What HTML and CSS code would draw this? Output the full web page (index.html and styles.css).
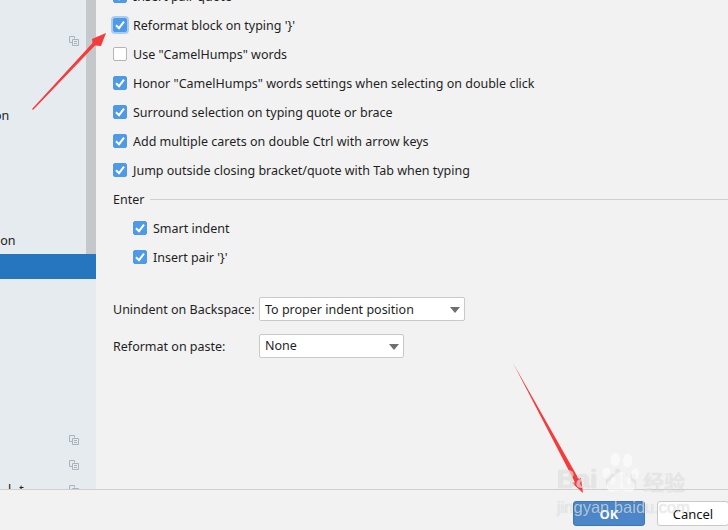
FILE: index.html
```html
<!DOCTYPE html>
<html lang="en">
<head>
  <meta charset="UTF-8" />
  <title>Smart Keys</title>
  <link rel="stylesheet" href="styles.css">
</head>
<body>
  <div class="main">
    <!-- settings tree, cut off on the left -->
    <div class="sidebar">
      <div class="tree">
        <div class="tree-row row-a">
          <svg class="copy-icon" viewBox="0 0 10 10"><use href="#copy"/></svg>
        </div>
        <div class="tree-row row-b"><span class="tree-label">on</span></div>
        <div class="tree-row row-c"><span class="tree-label">ion</span></div>
        <div class="tree-row selected"></div>
        <div class="tree-row row-d"><svg class="copy-icon" viewBox="0 0 10 10"><use href="#copy"/></svg></div>
        <div class="tree-row row-e"><svg class="copy-icon" viewBox="0 0 10 10"><use href="#copy"/></svg></div>
        <div class="tree-row row-f"><span class="tree-label">l</span><span class="tree-label">t</span><svg class="copy-icon" viewBox="0 0 10 10"><use href="#copy"/></svg></div>
      </div>
      <div class="scrollbar"></div>
    </div>

    <div class="content">
      <div class="options">
        <label class="option"><span class="box on"><svg viewBox="0 0 14 14"><use href="#tick"/></svg></span>Insert pair quote</label>
        <label class="option"><span class="box on focus"><svg viewBox="0 0 14 14"><use href="#tick"/></svg></span>Reformat block on typing '}'</label>
        <label class="option"><span class="box"></span>Use "CamelHumps" words</label>
        <label class="option"><span class="box on"><svg viewBox="0 0 14 14"><use href="#tick"/></svg></span>Honor "CamelHumps" words settings when selecting on double click</label>
        <label class="option"><span class="box on"><svg viewBox="0 0 14 14"><use href="#tick"/></svg></span>Surround selection on typing quote or brace</label>
        <label class="option"><span class="box on"><svg viewBox="0 0 14 14"><use href="#tick"/></svg></span>Add multiple carets on double Ctrl with arrow keys</label>
        <label class="option"><span class="box on"><svg viewBox="0 0 14 14"><use href="#tick"/></svg></span>Jump outside closing bracket/quote with Tab when typing</label>
      </div>

      <div class="group-title"><span>Enter</span><i></i></div>
      <div class="options nested">
        <label class="option"><span class="box on"><svg viewBox="0 0 14 14"><use href="#tick"/></svg></span>Smart indent</label>
        <label class="option"><span class="box on"><svg viewBox="0 0 14 14"><use href="#tick"/></svg></span>Insert pair '}'</label>
      </div>

      <div class="fields">
        <span class="field-label">Unindent on Backspace:</span>
        <div class="select wide">To proper indent position<b></b></div>
        <span class="field-label">Reformat on paste:</span>
        <div class="select narrow">None<b></b></div>
      </div>
    </div>
  </div>

  <div class="footer">
    <button class="btn primary">OK</button>
    <button class="btn">Cancel</button>
  </div>

  <!-- red arrows drawn over the screenshot -->
  <svg class="arrows" viewBox="0 0 728 530">
    <polygon points="32,109 92.500,43 92,39 106,33 101,46 95,45.500 33,110" fill="#f53c3c"/>
    <polygon points="513,363 578.800,479 581,478 583,493 572,483 574.500,481.500" fill="#f53c3c"/>
  </svg>

  <!-- Baidu watermark -->
  <div class="watermark">
    <div class="wm-logo">
      <span>Bai</span>
      <span class="wm-du">du</span>
      <span class="wm-cn">经验</span>
      <svg class="paw" viewBox="0 0 40 44">
        <ellipse cx="6" cy="22" rx="4.500" ry="6"/>
        <ellipse cx="15" cy="8" rx="5" ry="7"/>
        <ellipse cx="28" cy="9" rx="5" ry="7"/>
        <ellipse cx="36" cy="23" rx="4" ry="6"/>
        <path d="M21 21c-6 0-8 7-13 10-4 3-2 11 4 11 4 0 6-2 9-2s5 2 9 2c6 0 8-8 3-11-5-3-6-10-12-10z"/>
      </svg>
    </div>
    <div class="wm-url">jingyan.baidu.com</div>
  </div>

  <svg class="defs" width="0" height="0">
    <defs>
      <symbol id="tick" viewBox="0 0 14 14">
        <path d="M3 7.200 6 10.200 11 3.600" fill="none" stroke="#fff" stroke-width="2"/>
      </symbol>
      <symbol id="copy" viewBox="0 0 10 10">
        <path d="M5.500 2.500V.5H.5V6.500H3M3.500 3.500H9.500V9.500H3.500ZM5 5.500H8M5 7.500H8" fill="none" stroke="#a9b3bb" stroke-width="1"/>
      </symbol>
    </defs>
  </svg>
</body>
</html>
```
FILE: styles.css
```css
* { margin: 0; padding: 0; box-sizing: border-box; }
html, body {
  width: 728px;
  height: 530px;
  overflow: hidden;
  background: #f2f2f2;
  color: #1f1f1f;
  font-family: "Noto Sans", "Open Sans", sans-serif;
  font-size: 12.5px;
}

.main {
  display: flex;
  height: 489px;
}

/* Sidebar */
.sidebar {
  display: flex;
  width: 96px;
  flex: none;
  background: #e6ebf0;
  overflow: hidden;
}
.tree {
  width: 86px;
  flex: none;
}
.tree-row {
  display: flex;
  align-items: center;
  width: 96px;
}
.tree-label { color: #222; line-height: 18px; }
.copy-icon { width: 10px; height: 10px; display: block; margin-left: auto; margin-right: 17px; }
.row-a { padding-top: 36px; height: 46px; }
.row-b { margin-top: 61px; height: 18px; }
.row-b .tree-label { margin-left: -6px; }
.row-c { margin-top: 107px; height: 18px; }
.row-c .tree-label { margin-left: -3px; }
.selected { margin-top: 4px; height: 25px; background: #2675bf; }
.row-d { margin-top: 156px; height: 10px; }
.row-e { margin-top: 15px; height: 10px; }
.row-f { margin-top: 15px; height: 10px; align-items: flex-start; }
.row-f .tree-label { margin-top: -4px; margin-left: 8px; }
.scrollbar {
  width: 10px;
  height: 254px;
  background: #c4c8ca;
  flex: none;
}

/* Checkbox rows */
.content {
  flex: 1;
  padding-left: 17px;
  overflow: hidden;
}
.options {
  display: flex;
  flex-direction: column;
  gap: 11px;
}
.content > .options:first-child { margin-top: -13px; }
.option {
  display: flex;
  align-items: center;
  gap: 6px;
  height: 18px;
  white-space: nowrap;
}
.box {
  width: 14px;
  height: 14px;
  flex: none;
  background: #fff;
  border: 1px solid #b5b5b5;
  border-radius: 2px;
}
.box svg { display: block; width: 14px; height: 14px; margin: -1px; }
.box.on { background: #4e9ae6; border-color: #4e9ae6; }
.box.focus { box-shadow: 0 0 0 2px #a9cdf2; }

.group-title {
  display: flex;
  align-items: center;
  gap: 6px;
  margin-top: 11px;
  height: 18px;
}
.group-title i {
  flex: 1;
  height: 1px;
  background: #d1d1d1;
}
.nested {
  margin-top: 11px;
  padding-left: 20px;
}

/* Dropdowns */
.fields {
  display: grid;
  grid-template-columns: 146px max-content;
  align-items: center;
  row-gap: 13px;
  margin-top: 31px;
}
.field-label { white-space: nowrap; }
.select {
  position: relative;
  height: 24px;
  line-height: 22px;
  padding-left: 5px;
  background: #fff;
  border: 1px solid #c9c9c9;
  border-radius: 2px;
}
.select.wide { width: 206px; line-height: 24px; }
.select.narrow { width: 145px; }
.select b {
  position: absolute;
  right: 4px;
  top: 9px;
  width: 0;
  height: 0;
  border-left: 5px solid transparent;
  border-right: 5px solid transparent;
  border-top: 6px solid #6f6f6f;
}

/* Footer */
.footer {
  display: flex;
  justify-content: flex-end;
  gap: 12px;
  height: 41px;
  padding-top: 11px;
  border-top: 1px solid #cfcfcf;
}
.btn {
  width: 72px;
  height: 25px;
  font: inherit;
  font-size: 13px;
  color: #111;
  background: #fff;
  border: 1px solid #c9c9c9;
  border-radius: 3px;
}
.btn:last-child { margin-right: -1px; }
.btn.primary {
  background: #4a86c8;
  border-color: #3f76b4;
  color: #fff;
  font-weight: 700;
}

/* Overlays */
.arrows {
  position: absolute;
  left: 0;
  top: 0;
  width: 728px;
  height: 530px;
}
.watermark {
  position: absolute;
  left: 557px;
  top: 452px;
  width: 135px;
  color: rgba(255,255,255,0.62);
  font-family: "Liberation Sans", sans-serif;
  text-shadow: 0 0 1px rgba(0,0,0,0.22);
}
.wm-logo {
  position: relative;
  display: flex;
  align-items: flex-end;
  height: 42px;
  font-size: 26px;
  font-weight: 700;
  line-height: 30px;
}
.paw {
  position: absolute;
  left: 44px;
  top: 0;
  width: 38px;
  height: 42px;
  fill: rgba(255,255,255,0.55);
}
.wm-du { margin-left: 8px; }
.wm-cn {
  font-family: "Noto Sans CJK SC", sans-serif;
  font-size: 21px;
  font-weight: 400;
  line-height: 26px;
  margin-left: 6px;
}
.wm-url {
  font-size: 16.500px;
  line-height: 18px;
  margin-top: 4px;
  white-space: nowrap;
}
.defs { position: absolute; }
```
